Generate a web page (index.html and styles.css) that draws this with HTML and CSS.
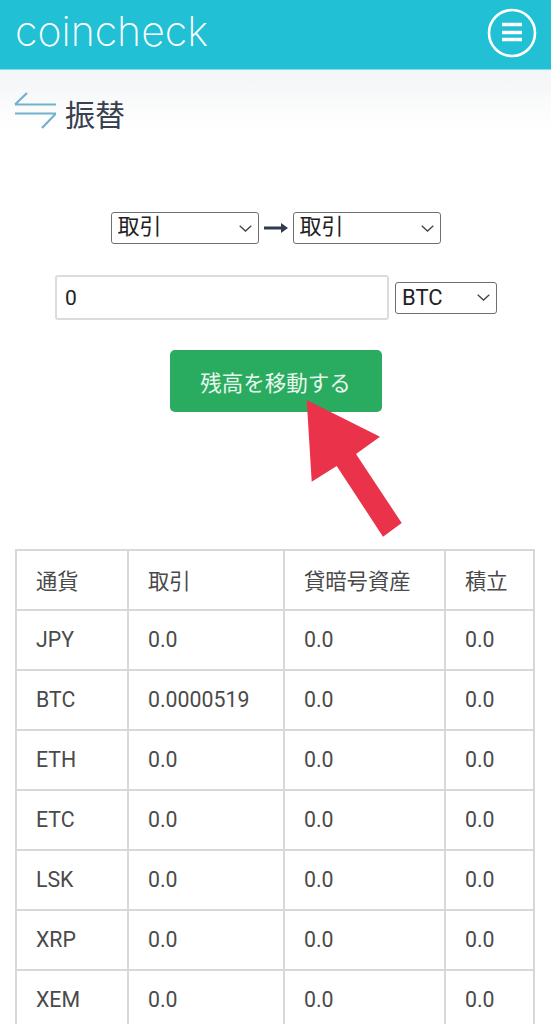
FILE: index.html
```html
<!DOCTYPE html>
<html lang="ja">
<head>
    <meta charset="UTF-8">
    <meta name="viewport" content="width=device-width, initial-scale=1.0">
    <title>振替</title>
    <link rel="stylesheet" href="styles.css">
</head>
<body>
    <header class="topbar">
        <div class="logo">coincheck</div>
        <div class="menu-btn">
            <svg width="50" height="50" viewBox="0 0 50 50">
                <circle cx="25" cy="25" r="23" fill="none" stroke="#fff" stroke-width="2.6"/>
                <path d="M15 16.500H35M15 24.500H35M15 31.500H35" fill="none" stroke="#fff" stroke-width="3.400"/>
            </svg>
        </div>
    </header>

    <div class="title-area">
        <svg class="title-icon" width="42" height="40" viewBox="0 0 42 40">
            <path d="M1 12.500H42M1 12.500L13 1M1 21.500H42M42 21.500L28 36" fill="none" stroke="#6fb1cf" stroke-width="2.200"/>
        </svg>
        <h1>振替</h1>
    </div>

    <form class="transfer">
        <div class="from-to">
            <select class="sel wide"><option>取引</option></select>
            <svg width="24" height="12" viewBox="0 0 24 12">
                <path d="M0 6H18" stroke="#2f3a50" stroke-width="3"/>
                <path d="M17 1L24 6L17 11Z" fill="#2f3a50"/>
            </svg>
            <select class="sel wide"><option>取引</option></select>
        </div>
        <div class="amount">
            <input class="amount-input" type="text" value="0">
            <select class="sel coin"><option>BTC</option></select>
        </div>
        <button class="move-btn" type="button">残高を移動する</button>
    </form>

    <svg class="pointer" width="110" height="150" viewBox="300 395 110 150">
        <polygon points="306.7,400 380,436.7 356,454 401.7,523 383,536.7 336.7,466 311.7,481.7" fill="#ea334b"/>
    </svg>

    <table class="balances">
        <tr><th>通貨</th><th>取引</th><th>貸暗号資産</th><th>積立</th></tr>
        <tr><td>JPY</td><td>0.0</td><td>0.0</td><td>0.0</td></tr>
        <tr><td>BTC</td><td>0.0000519</td><td>0.0</td><td>0.0</td></tr>
        <tr><td>ETH</td><td>0.0</td><td>0.0</td><td>0.0</td></tr>
        <tr><td>ETC</td><td>0.0</td><td>0.0</td><td>0.0</td></tr>
        <tr><td>LSK</td><td>0.0</td><td>0.0</td><td>0.0</td></tr>
        <tr><td>XRP</td><td>0.0</td><td>0.0</td><td>0.0</td></tr>
        <tr><td>XEM</td><td>0.0</td><td>0.0</td><td>0.0</td></tr>
    </table>
</body>
</html>
```

FILE: styles.css
```css
html, body {
    height: 1024px;
    overflow: hidden;
}
body {
    margin: 0;
    position: relative;
    background-color: #fff;
    color: #333;
    font-family: Roboto, "Noto Sans CJK JP", sans-serif;
}
.topbar {
    height: 69px;
    display: flex;
    align-items: center;
    justify-content: space-between;
    padding: 0 14px 0 15px;
    background-color: #22c0d5;
    border-bottom: 1px solid #7fe0ec;
}
.logo {
    color: #fff;
    font-family: Inter, sans-serif;
    font-weight: 200;
    font-size: 41px;
    line-height: 62px;
    margin-bottom: 7px;
}
.menu-btn {
    display: flex;
    margin-bottom: 3px;
}
.title-area {
    height: 60px;
    display: flex;
    align-items: center;
    padding: 0 0 0 14px;
    background: linear-gradient(#f3f5f6, #fff);
}
.title-icon {
    margin-top: 24px;
    margin-right: 9px;
}
h1 {
    margin: 26px 0 0;
    font-size: 30px;
    font-weight: 400;
    color: #39404f;
}
.transfer {
    display: flex;
    flex-direction: column;
    align-items: center;
    padding-top: 82px;
}
.from-to {
    display: flex;
    align-items: center;
    gap: 5px;
    height: 32px;
}
.sel {
    appearance: none;
    height: 32px;
    padding: 0 0 0 6px;
    background: #fff url("data:image/svg+xml,%3Csvg xmlns='http://www.w3.org/2000/svg' width='13' height='7'%3E%3Cpath d='M.7.7L6.500 6L12.300.7' fill='none' stroke='%23444' stroke-width='1.300'/%3E%3C/svg%3E") no-repeat right 6px center;
    border: 1px solid #6f6f6f;
    border-radius: 3px;
    color: #222;
    font-family: Roboto, "Noto Sans CJK JP", sans-serif;
    font-size: 22px;
}
.wide {
    width: 148px;
    padding-bottom: 3px;
}
.coin {
    width: 102px;
}
.amount {
    display: flex;
    align-items: center;
    gap: 6px;
    margin-top: 31px;
    margin-left: 1px;
}
.amount-input {
    box-sizing: border-box;
    width: 334px;
    height: 45px;
    padding: 0 8px;
    border: 2px solid #dcdcdc;
    border-radius: 3px;
    color: #222;
    font-family: Roboto, sans-serif;
    font-size: 21px;
}
.move-btn {
    width: 212px;
    height: 62px;
    margin-top: 30px;
    background-color: #2aac60;
    border: 0;
    border-radius: 5px;
    color: #e8f7ee;
    font-family: "Noto Sans CJK JP", sans-serif;
    font-size: 21.500px;
}
.pointer {
    position: absolute;
    left: 300px;
    top: 395px;
}
.balances {
    width: 520px;
    margin: 137px 0 0 15px;
    border-collapse: collapse;
    table-layout: fixed;
    font-size: 21.300px;
    color: #4a4a4a;
}
.balances th, .balances td {
    height: 56px;
    padding: 0 0 2px 19px;
    border: 2px solid #d8d8d8;
    font-weight: 400;
    text-align: left;
}
.balances th:nth-child(1) { width: 91px; }
.balances th:nth-child(2) { width: 135px; }
.balances th:nth-child(3) { width: 140px; }
```
